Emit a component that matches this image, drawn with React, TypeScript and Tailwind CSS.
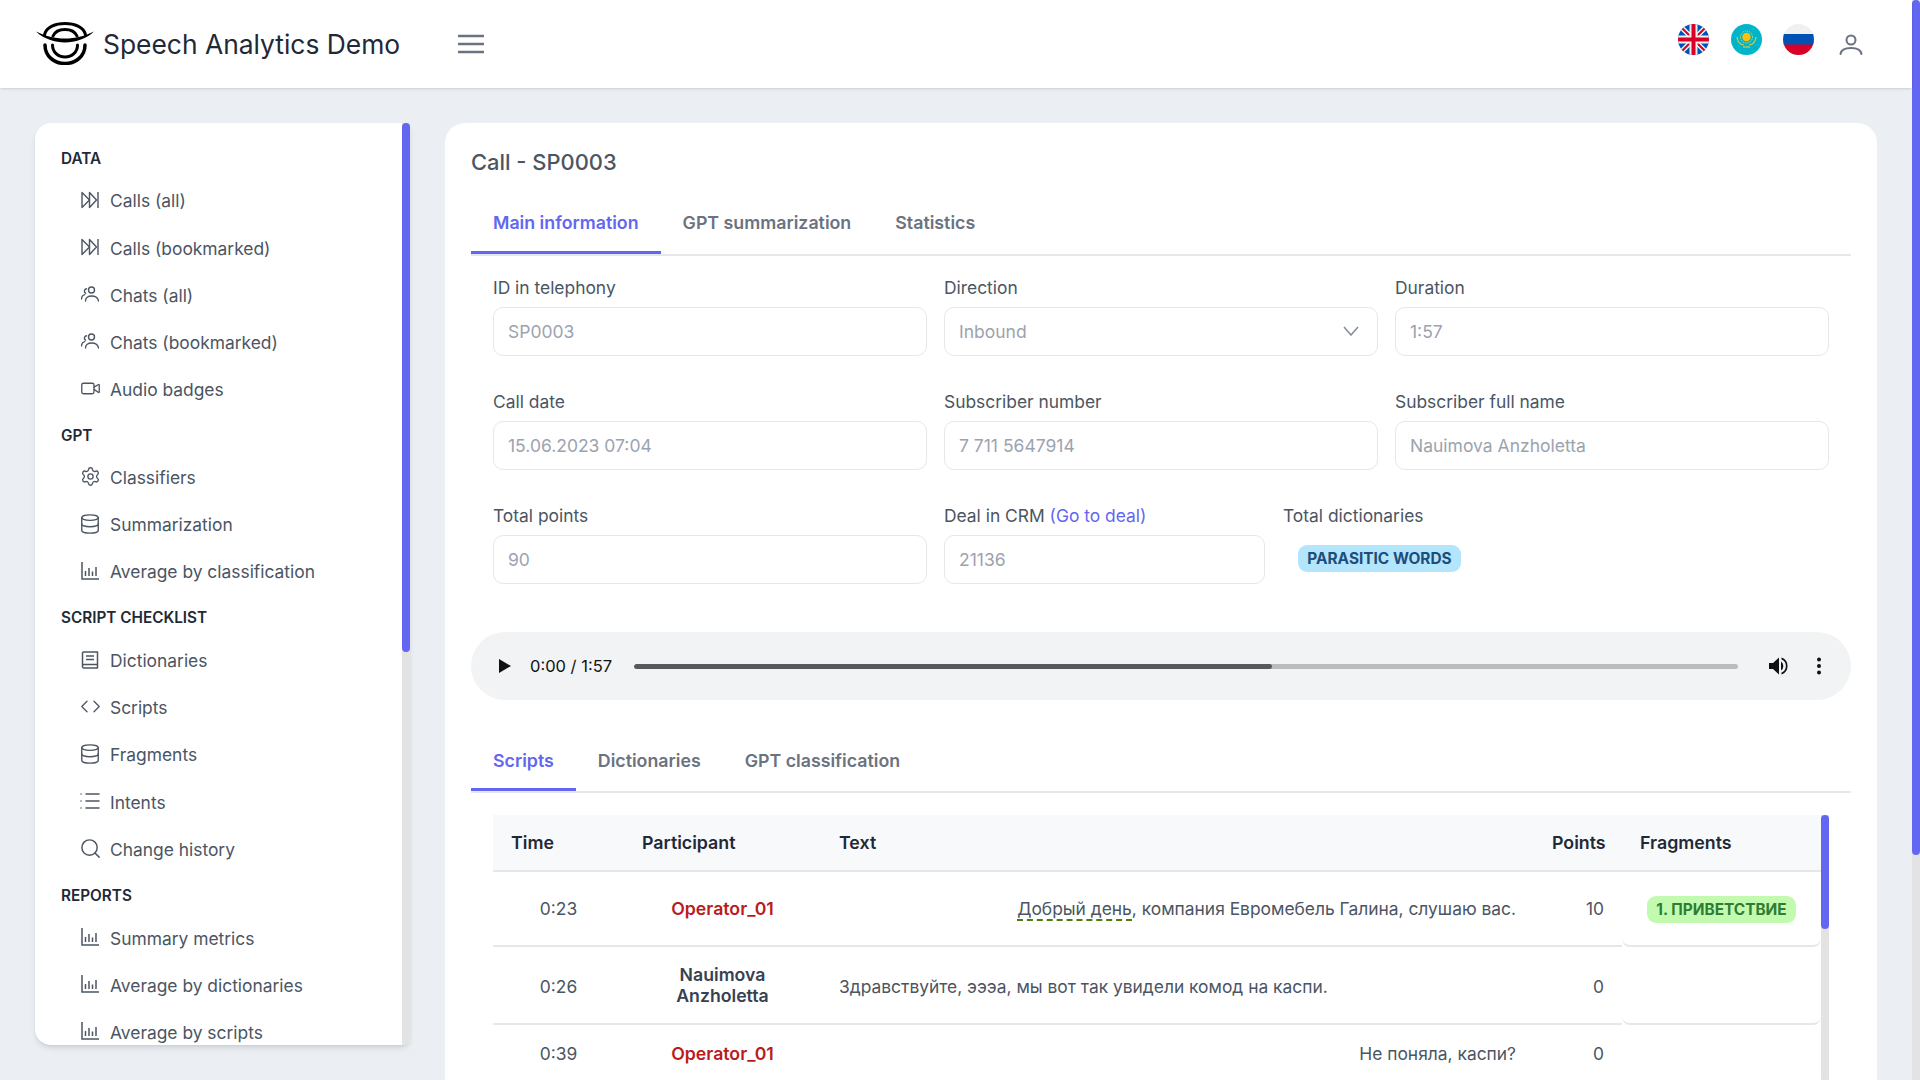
import { Fragment } from "react";
import { Code, Database, List, Search, Settings, Video } from "lucide-react";

function ForwardIcon() {
  return (
    <svg width="18" height="18" viewBox="0 0 18 18" fill="none" stroke="currentColor" strokeWidth="1.4" strokeLinejoin="round">
      <path d="M1 1.500v15L8.500 9z" />
      <path d="M8.500 1.500v15L15.500 9z" />
      <path d="M17 1v16" />
    </svg>
  );
}

function PeopleIcon() {
  return (
    <svg width="18" height="18" viewBox="0 0 18 18" fill="none" stroke="currentColor" strokeWidth="1.4" strokeLinecap="round">
      <circle cx="10.500" cy="5" r="3" />
      <path d="M4.500 16c0-3.200 2.600-5 6-5s6.500 1.800 7 5" />
      <path d="M5.500 3.800a2.400 2.400 0 0 0-1 4.400" />
      <path d="M.5 14c0-2.400 1.200-3.800 3.200-4.400" />
    </svg>
  );
}

function ChartIcon() {
  return (
    <svg width="18" height="18" viewBox="0 0 18 18" fill="none" stroke="currentColor" strokeWidth="1.500">
      <path d="M1 0v17h17" />
      <path d="M4.500 9v5M8 6v8M11.500 9.500v4.500M15 5v9" />
    </svg>
  );
}

function BookIcon() {
  return (
    <svg width="18" height="18" viewBox="0 0 18 18" fill="none" stroke="currentColor" strokeWidth="1.500" strokeLinejoin="round">
      <path d="M1.500 15V2A1 1 0 0 1 2.500 1h14v16H3A1.500 1.500 0 0 1 1.500 15zm0 0A1.500 1.500 0 0 1 3 13.500h13.500" />
      <path d="M5 5h8M5 8.500h8" />
    </svg>
  );
}

const menu = [
  {
    title: "DATA",
    items: [
      { label: "Calls (all)", icon: <ForwardIcon /> },
      { label: "Calls (bookmarked)", icon: <ForwardIcon /> },
      { label: "Chats (all)", icon: <PeopleIcon /> },
      { label: "Chats (bookmarked)", icon: <PeopleIcon /> },
      { label: "Audio badges", icon: <Video size={21} strokeWidth={1.5} /> },
    ],
  },
  {
    title: "GPT",
    items: [
      { label: "Classifiers", icon: <Settings size={21} strokeWidth={1.5} /> },
      { label: "Summarization", icon: <Database size={22} strokeWidth={1.5} /> },
      { label: "Average by classification", icon: <ChartIcon /> },
    ],
  },
  {
    title: "SCRIPT CHECKLIST",
    items: [
      { label: "Dictionaries", icon: <BookIcon /> },
      { label: "Scripts", icon: <Code size={21} strokeWidth={1.5} /> },
      { label: "Fragments", icon: <Database size={22} strokeWidth={1.5} /> },
      { label: "Intents", icon: <List size={24} strokeWidth={1.5} /> },
      { label: "Change history", icon: <Search size={23} strokeWidth={1.5} /> },
    ],
  },
  {
    title: "REPORTS",
    items: [
      { label: "Summary metrics", icon: <ChartIcon /> },
      { label: "Average by dictionaries", icon: <ChartIcon /> },
      { label: "Average by scripts", icon: <ChartIcon /> },
    ],
  },
];

function Logo() {
  return (
    <svg className="-mt-[2px]" width="58" height="43" viewBox="0 0 58 43" fill="none" stroke="#000" strokeLinecap="round">
      <path d="M8.500 13C10 4.500 20 1.500 29 1.500S48 4.500 49.500 13" strokeWidth="3" />
      <path d="M17 14c2-4.500 7-6.500 12-6.500S39 9.500 41 14" strokeWidth="3" />
      <path d="M0 9.500c9 4.500 19 7 29 7s20-2.500 29-7c-8 7.500-19 11-29 11S8 17 0 9.500z" fill="#000" stroke="none" />
      <path d="M9 23c0 11 9 18.500 20 18.500S49 34 49 23" strokeWidth="3.500" />
      <path d="M16.500 23c0 7 5.500 12 12.500 12s12.500-5 12.500-12" strokeWidth="3" />
    </svg>
  );
}

function FlagUk() {
  return (
    <svg width="31" height="31" viewBox="0 0 31 31">
      <defs>
        <clipPath id="uk">
          <circle cx="15.500" cy="15.500" r="15.500" />
        </clipPath>
      </defs>
      <g clipPath="url(#uk)">
        <rect width="31" height="31" fill="#0052b4" />
        <path d="M0 0l31 31M31 0L0 31" stroke="#f0f0f0" strokeWidth="5" />
        <path d="M0 0l31 31M31 0L0 31" stroke="#d80027" strokeWidth="2" />
        <path d="M15.500 0v31M0 15.500h31" stroke="#f0f0f0" strokeWidth="8" />
        <path d="M15.500 0v31M0 15.500h31" stroke="#d80027" strokeWidth="4" />
      </g>
    </svg>
  );
}

function FlagKz() {
  return (
    <svg width="31" height="31" viewBox="0 0 31 31">
      <circle cx="15.500" cy="15.500" r="15.500" fill="#00b5c9" />
      <circle cx="15.500" cy="13" r="4.200" fill="#ffc107" />
      <circle cx="15.500" cy="13" r="6" fill="none" stroke="#ffda44" strokeWidth="1" strokeDasharray="1 1" />
      <path d="M6 13c.5 5 3 7.500 7 8M25 13c-.5 5-3 7.500-7 8" fill="none" stroke="#e8c13a" strokeWidth="1.200" />
      <path d="M12 23h7" stroke="#e8c13a" strokeWidth="1.200" />
    </svg>
  );
}

function FlagRu() {
  return (
    <svg width="31" height="31" viewBox="0 0 31 31">
      <defs>
        <clipPath id="ru">
          <circle cx="15.500" cy="15.500" r="15.500" />
        </clipPath>
      </defs>
      <g clipPath="url(#ru)">
        <rect width="31" height="11" fill="#f0f0f0" />
        <rect y="10" width="31" height="11" fill="#0052b4" />
        <rect y="20.500" width="31" height="11" fill="#d80027" />
      </g>
    </svg>
  );
}

function UserIcon() {
  return (
    <svg width="24" height="24" viewBox="0 0 24 24" fill="none" stroke="#6b7280" strokeWidth="2" strokeLinecap="round">
      <circle cx="12" cy="7" r="4.500" />
      <path d="M1.500 21c.5-3.500 4-6 10.500-6s10 2.500 10.500 6" />
    </svg>
  );
}

function Tab({ label, active }: { label: string; active?: boolean }) {
  return (
    <div
      className={
        "px-[22px] pb-[1.500px] h-full flex items-center text-[17.800px] font-semibold -mb-[2px] border-b-[3px] " +
        (active ? "text-[#6366f1] border-[#6366f1]" : "text-[#6b7280] border-transparent")
      }
    >
      {label}
    </div>
  );
}

function Field({ label, value, chevron, className }: any) {
  return (
    <div className={className}>
      <div className="text-[17.400px] leading-5 mb-[9px] text-[#4b5563] whitespace-nowrap">{label}</div>
      <div className="h-[49px] border border-[#e5e7eb] rounded-[10px] px-[14px] flex items-center justify-between text-[17.500px] text-[#9ca3af]">
        <span className="pt-[2px]">{value}</span>
        {chevron && (
          <svg className="mr-[4px]" width="16" height="10" viewBox="0 0 16 10" fill="none" stroke="#848b95" strokeWidth="1.500">
            <path d="M1 1l7 8 7-8" />
          </svg>
        )}
      </div>
    </div>
  );
}

function Pill({ text, className }: { text: string; className: string }) {
  return (
    <span className={"inline-flex items-center justify-center pt-[1px] rounded-[9px] font-bold text-[15.400px] whitespace-nowrap " + className}>
      {text}
    </span>
  );
}

const cell = "border-b-2 border-[#e5e7eb] text-[17.400px] text-[#4b5563]";
const row1 = cell + " pt-[17px] pb-[15px]";
const row2 = cell + " pt-[18px] pb-[14px]";
const row3 = cell + " py-[16px]";
const nameClass = "text-center font-semibold !text-[17.700px]";
const headClass = "px-[18px] pt-[2px] font-semibold border-b-2 border-[#e5e7eb]";

export default function App() {
  return (
    <div className="h-screen w-screen overflow-hidden flex bg-[#ebeef3] font-['Inter',sans-serif]">
      <div className="flex-1 min-w-0 flex flex-col">
        {/* top bar */}
        <header className="h-[88px] shrink-0 bg-white shadow-sm flex items-center pl-9 pr-[49px] relative">
          <Logo />
          <span className="ml-[9px] text-[26.400px] text-[#1f2937] leading-none">Speech Analytics Demo</span>
          <svg className="ml-[57px]" width="28" height="20" viewBox="0 0 28 20" stroke="#6b7280" strokeWidth="2.500">
            <path d="M1 2h26M1 10h26M1 18h26" />
          </svg>
          <div className="ml-auto flex items-start">
            <div className="flex gap-[21.400px] -mt-[7px] mr-[25px]">
              <FlagUk />
              <FlagKz />
              <FlagRu />
            </div>
            <div className="mt-[2px]">
              <UserIcon />
            </div>
          </div>
        </header>

        <div className="flex-1 min-h-0 flex gap-[35px] pl-[35px] pt-[35px]">
          {/* sidebar */}
          <aside className="w-[375px] h-[922px] shrink-0 bg-white rounded-l-2xl rounded-br-lg shadow-md overflow-hidden flex">
            <nav className="flex-1 min-w-0 pl-[26px] pt-[13px] overflow-hidden">
              {menu.map((group) => (
                <Fragment key={group.title}>
                  <div className={"pt-[4px] flex items-center text-[15.300px] font-semibold text-[#1f2937] " + (group.title === "GPT" ? "h-[41px]" : "h-[42px]")}>
                    {group.title}
                  </div>
                  {group.items.map((item) => (
                    <div key={item.label} className="h-[47.100px] flex items-center pl-[20px] gap-[11px] text-[17.400px] text-[#4b5563]">
                      <span className="w-[18px] h-[18px] -mt-[3px] flex items-center justify-center shrink-0 [&>svg]:shrink-0">{item.icon}</span>
                      <span className="whitespace-nowrap">{item.label}</span>
                    </div>
                  ))}
                </Fragment>
              ))}
            </nav>
            <div className="w-2 shrink-0 bg-[#e3e3e3]">
              <div className="h-[529px] bg-[#6366f1] rounded-[4px]"></div>
            </div>
          </aside>

          {/* main card */}
          <main className="w-[1432px] shrink-0 bg-white rounded-t-[20px] pl-[26px] pr-[26px] pt-[24px]">
            <h1 className="text-[21.900px] leading-[30px] font-medium text-[#4b5563]">Call - SP0003</h1>

            <div className="mt-[21.500px] h-[57px] flex border-b-2 border-[#e5e7eb]">
              <Tab label="Main information" active />
              <Tab label="GPT summarization" />
              <Tab label="Statistics" />
            </div>

            <div className="px-[22px] pt-[22px]">
              <div className="grid grid-cols-3 gap-x-[17px] gap-y-[36px]">
                <Field label="ID in telephony" value="SP0003" />
                <Field label="Direction" value="Inbound" chevron />
                <Field label="Duration" value="1:57" />
                <Field label="Call date" value="15.06.2023 07:04" />
                <Field label="Subscriber number" value="7 711 5647914" />
                <Field label="Subscriber full name" value="Nauimova Anzholetta" />
              </div>
              <div className="flex gap-x-[17px] mt-[36px]">
                <Field className="w-[434px]" label="Total points" value="90" />
                <Field
                  className="w-[321px]"
                  label={
                    <>
                      Deal in CRM <span className="text-[#6366f1]">(Go to deal)</span>
                    </>
                  }
                  value="21136"
                />
                <div className="ml-px">
                  <div className="text-[17.400px] leading-5 text-[#4b5563]">Total dictionaries</div>
                  <div className="mt-[19px] ml-[15px]">
                    <Pill text="PARASITIC WORDS" className="w-[163px] h-[27px] bg-[#b3e5fc] text-[#1e4d7b]" />
                  </div>
                </div>
              </div>
            </div>

            {/* audio player */}
            <div className="mt-[48.500px] h-[68px] rounded-[34px] bg-[#f1f3f4] flex items-center pl-[27px] pr-[28px] text-[16.500px] text-[#111]">
              <svg width="14" height="16" viewBox="0 0 14 16" fill="#111">
                <path d="M1 1v14l12-7z" />
              </svg>
              <span className="ml-[18px] w-[104px] shrink-0 whitespace-nowrap">0:00 / 1:57</span>
              <div className="w-[1104px] h-[5px] rounded-full bg-[#bcbcbc] overflow-hidden">
                <div className="h-full w-[638px] bg-[#595959] rounded-full"></div>
              </div>
              <svg className="ml-[30px]" width="22" height="22" viewBox="0 0 22 22" fill="#111">
                <path d="M1 8v6h4l6 5.500V2.500L5 8z" />
                <path d="M13 6.500a5.500 5.500 0 0 1 0 9zM13.500 2.500a9 9 0 0 1 0 17v-2a7 7 0 0 0 0-13z" />
              </svg>
              <svg className="ml-[27px]" width="4" height="18" viewBox="0 0 4 18" fill="#111">
                <circle cx="2" cy="2.500" r="2" />
                <circle cx="2" cy="9" r="2" />
                <circle cx="2" cy="15.500" r="2" />
              </svg>
            </div>

            {/* lower tabs */}
            <div className="mt-[36.500px] h-[56.500px] flex border-b-2 border-[#e5e7eb]">
              <Tab label="Scripts" active />
              <Tab label="Dictionaries" />
              <Tab label="GPT classification" />
            </div>

            <div className="mt-[22px] mx-[22px] flex">
              <table className="w-[1328px] table-fixed border-separate border-spacing-0 shrink-0">
                <colgroup>
                  <col className="w-[131px]" />
                  <col className="w-[197px]" />
                  <col className="w-[713px]" />
                  <col className="w-[88px]" />
                  <col className="w-[199px]" />
                </colgroup>
                <thead>
                  <tr className="bg-[#f8f9fb] text-[17.800px] text-[#1f2937]">
                    <th className={headClass + " h-[57px] text-left"}>Time</th>
                    <th className={headClass + " text-left"}>Participant</th>
                    <th className={headClass + " text-left"}>Text</th>
                    <th className={headClass + " text-right"}>Points</th>
                    <th className={headClass + " text-left"}>Fragments</th>
                  </tr>
                </thead>
                <tbody>
                  <tr>
                    <td className={row1 + " h-[75px] text-center"}>0:23</td>
                    <td className={row1 + " " + nameClass + " !text-[#b91c1c]"}>Operator_01</td>
                    <td className={row1 + " px-[18px] text-right"}>
                      <span className="border-b-2 border-dashed border-[#4d7c0f]">Добрый день</span>, компания Евромебель Галина, слушаю вас.
                    </td>
                    <td className={row1 + " px-[18px] text-right"}>10</td>
                    <td className={row1 + " pl-[25px] rounded-b-lg"}>
                      <Pill text="1. ПРИВЕТСТВИЕ" className="w-[149px] h-[27px] bg-[#c2fbb0] text-[#2e7d32]" />
                    </td>
                  </tr>
                  <tr>
                    <td className={row2 + " h-[78px] text-center"}>0:26</td>
                    <td className={row3 + " " + nameClass + " leading-[21px] !text-[#374151]"}>
                      Nauimova
                      <br />
                      Anzholetta
                    </td>
                    <td className={row2 + " px-[18px]"}>Здравствуйте, эээа, мы вот так увидели комод на каспи.</td>
                    <td className={row2 + " px-[18px] text-right"}>0</td>
                    <td className={row2 + " rounded-b-lg"}></td>
                  </tr>
                  <tr>
                    <td className={row3 + " h-[57px] text-center"}>0:39</td>
                    <td className={row3 + " " + nameClass + " !text-[#b91c1c]"}>Operator_01</td>
                    <td className={row3 + " px-[18px] text-right"}>Не поняла, каспи?</td>
                    <td className={row3 + " px-[18px] text-right"}>0</td>
                    <td className={row3 + " rounded-b-lg"}></td>
                  </tr>
                </tbody>
              </table>
              <div className="w-2 shrink-0 bg-[#e3e3e3]">
                <div className="h-[114px] bg-[#6366f1] rounded-[4px]"></div>
              </div>
            </div>
          </main>
        </div>
      </div>

      {/* page scrollbar */}
      <div className="w-2 shrink-0 bg-[#e3e3e3]">
        <div className="h-[855px] bg-[#6366f1] rounded-[4px]"></div>
      </div>
    </div>
  );
}
